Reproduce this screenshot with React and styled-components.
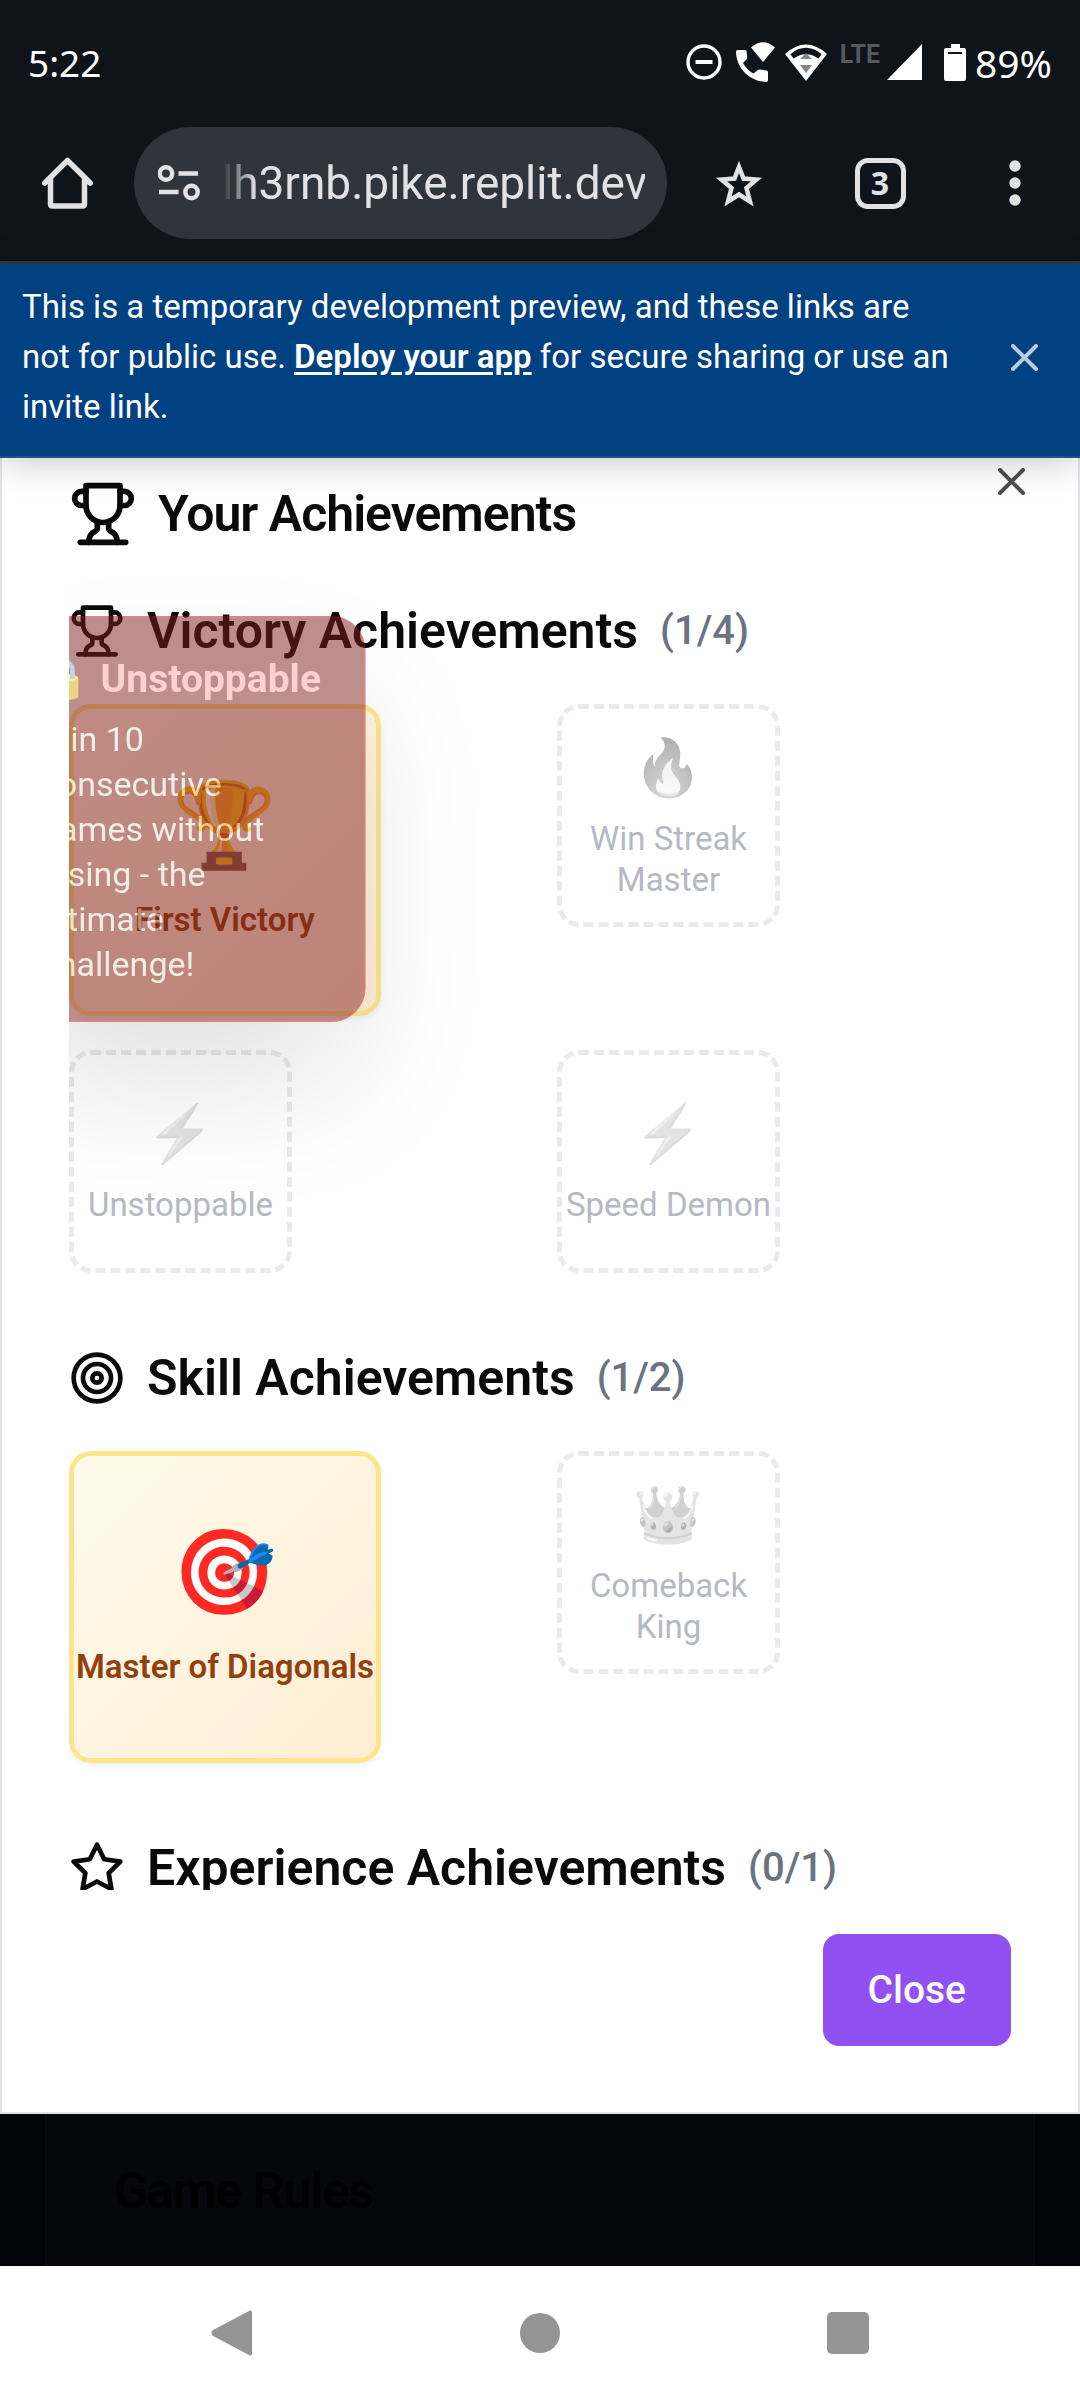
import React from "react";
import styled, { createGlobalStyle, css } from "styled-components";

const GlobalStyle = createGlobalStyle`
  *, *::before, *::after { box-sizing: border-box; }
  body { margin: 0; background: #fff; font-family: Roboto, "Liberation Sans", sans-serif; color: #0a0a0a; }
  button { font: inherit; border: 0; padding: 0; background: none; cursor: pointer; }
  h2, h3, p { margin: 0; }
  svg { display: block; flex: none; }
`;

const Screen = styled.div`
  display: flex;
  flex-direction: column;
  min-height: 100vh;
`;

/* ---------- system status bar ---------- */

const StatusBar = styled.header`
  display: flex;
  align-items: center;
  justify-content: space-between;
  height: 124px;
  padding: 0 28px;
  background: #0f141b;
  color: #fff;
  font-family: "Noto Sans", sans-serif;
  font-size: 37px;
`;

const StatusIcons = styled.div`
  display: flex;
  align-items: center;
`;

const StatusIcon = styled.svg`
  margin-right: ${(p) => p.$gap}px;
`;

const Network = styled.span`
  align-self: flex-start;
  margin-right: 7px;
  font: 700 25px/38px Roboto, sans-serif;
  color: #55585c;
`;

const BatteryLevel = styled.span`
  font-size: 39px;
`;

/* ---------- browser toolbar ---------- */

const Toolbar = styled.nav`
  display: grid;
  grid-template-columns: 134px minmax(0, 1fr) 144px 138px 131px;
  align-items: center;
  padding: 3px 0 22px;
  background: #0f141b;
  border-bottom: 3px solid #33383e;
  color: #e2e2e5;
`;

const ToolButton = styled.button`
  display: flex;
  align-items: center;
  justify-content: center;
  height: 112px;
  color: inherit;
`;

const AddressPill = styled.div`
  display: flex;
  align-items: center;
  height: 112px;
  padding: 0 22px 0 24px;
  border-radius: 56px;
  background: #2f353c;
`;

const AddressInput = styled.input`
  flex: 1;
  min-width: 0;
  margin-left: 22px;
  padding: 0;
  border: 0;
  outline: 0;
  background: none;
  color: inherit;
  font: 400 46px/60px Roboto, sans-serif;
  text-align: right;
  mask-image: linear-gradient(to right, transparent, #000 34px);
`;

const TabCount = styled.span`
  display: flex;
  align-items: center;
  justify-content: center;
  width: 51px;
  height: 51px;
  border: 5px solid currentColor;
  border-radius: 13px;
  font: 700 32px/32px "Noto Sans", sans-serif;
`;

/* ---------- preview banner ---------- */

const Banner = styled.aside`
  position: relative;
  z-index: 2;
  display: flex;
  align-items: center;
  gap: 32px;
  padding: 18px 22px 24px;
  background: #004182;
  border-bottom: 2px solid #1a5490;
  box-shadow: 0 4px 34px rgba(0, 0, 0, 0.22);
  color: #fff;
`;

const BannerText = styled.p`
  flex: 1;
  font-size: 33px;
  line-height: 50px;
`;

const BannerLink = styled.a`
  color: inherit;
  font-weight: 600;
  text-underline-offset: 4px;
`;

const BannerClose = styled.button`
  display: flex;
  justify-content: center;
  width: 68px;
  color: #b8cbdf;
`;

/* ---------- dialog ---------- */

const Dialog = styled.section`
  position: relative;
  padding: 22px 67px 66px;
  border: 2px solid #e3e3e6;
  border-top: 0;
  background: #fff;
`;

const DialogTitle = styled.h2`
  display: flex;
  align-items: center;
  gap: 21px;
  font-size: 50px;
  line-height: 68px;
  font-weight: 600;
  letter-spacing: -1px;
`;

const DialogClose = styled.button`
  position: absolute;
  top: 3px;
  right: 47px;
  display: flex;
  align-items: center;
  justify-content: center;
  width: 40px;
  height: 40px;
  color: #4f4f4f;
`;

const ScrollArea = styled.div`
  display: flex;
  flex-direction: column;
  gap: 77px;
  max-height: 1320px;
  margin-top: 22px;
  padding-top: 33px;
  overflow: auto;
  scrollbar-width: none;
`;

const SectionTitle = styled.h3`
  display: flex;
  align-items: center;
  gap: 22px;
  height: 56px;
  font-size: 50px;
  line-height: 56px;
  font-weight: 600;
`;

const SectionCount = styled.span`
  font-size: 40px;
  font-weight: 500;
  color: #6b7280;
`;

const CardGrid = styled.div`
  display: grid;
  grid-template-columns: 1fr 1fr;
  justify-items: start;
  align-items: start;
  gap: 34px;
  margin-top: 45px;
`;

const Card = styled.article`
  position: relative;
  display: flex;
  flex-direction: column;
  align-items: center;
  justify-content: center;
  border-radius: 22px;
  font-size: 33px;
  line-height: 41px;
  text-align: center;
  ${(p) =>
    p.$unlocked
      ? css`
          width: 312px;
          height: 312px;
          border: 5px solid #fde68a;
          background: linear-gradient(135deg, #fffbeb, #ffedd5) padding-box;
          box-shadow: 0 3px 6px rgba(0, 0, 0, 0.06);
          color: #92400e;
          font-weight: 600;
        `
      : css`
          width: 223px;
          height: 223px;
          border: 5px dashed #e9eaee;
          color: #b5b9c1;
        `}
`;

const Emoji = styled.span`
  font-family: "Noto Color Emoji", sans-serif;
  font-weight: 400;
  ${(p) =>
    p.$unlocked
      ? css`
          margin-bottom: 28px;
          font-size: 84px;
          line-height: 90px;
        `
      : css`
          margin-bottom: 13px;
          font-size: 56px;
          line-height: 73px;
          filter: grayscale(1);
          opacity: 0.5;
        `}
`;

const CardLabel = styled.span`
  white-space: ${(p) => (p.$wrap ? "normal" : "nowrap")};
`;

const Tooltip = styled.div`
  position: absolute;
  z-index: 1;
  bottom: calc(100% + 33px);
  left: 50%;
  transform: translateX(-50%);
  width: max-content;
  padding: 33px 43px;
  border: 2px solid #b30f0f;
  border-radius: 34px;
  background: #7f1d1d;
  box-shadow: 0 70px 140px -16px rgba(0, 0, 0, 0.25);
  opacity: 0.5;
  text-align: left;
`;

const TooltipTitle = styled.div`
  display: flex;
  align-items: center;
  gap: 12px;
  font-size: 39px;
  line-height: 56px;
  font-weight: 700;
  color: #fca5a5;
`;

const TooltipIcon = styled.span`
  font: 400 39px/56px "Noto Color Emoji", sans-serif;
`;

const TooltipText = styled.p`
  max-width: 256px;
  margin-top: 10px;
  font-size: 34px;
  line-height: 45px;
  color: #e5e7eb;
`;

const DialogFooter = styled.footer`
  display: flex;
  justify-content: flex-end;
  margin-top: 44px;
`;

const PrimaryButton = styled.button`
  height: 112px;
  padding: 0 45px;
  border-radius: 16px;
  background: #9050f2;
  color: #fafafa;
  font-size: 39px;
  font-weight: 500;
`;

/* ---------- page behind the dialog ---------- */

const Backdrop = styled.div`
  display: flex;
  flex: 1;
  padding: 0 45px;
  background: #020308;
`;

const RulesCard = styled.section`
  flex: 1;
  padding: 49px 68px 47px;
  border: solid #0a0b10;
  border-width: 0 1px;
  background: #06070b;
`;

const RulesTitle = styled.h2`
  font-size: 50px;
  line-height: 56px;
  font-weight: 600;
  letter-spacing: -1px;
  color: #000;
`;

/* ---------- system navigation ---------- */

const SystemNav = styled.nav`
  display: flex;
  justify-content: center;
  gap: 188px;
  height: 134px;
  background: #fff;
`;

const NavButton = styled.button`
  display: flex;
  align-items: center;
  justify-content: center;
  width: 120px;
  color: #959595;
`;

const CrossIcon = ({ size = 27 }) => (
  <svg width={size} height={size} viewBox="0 0 27 27" fill="none" stroke="currentColor" strokeWidth="4" strokeLinecap="round">
    <path d="M2 2 25 25M25 2 2 25" />
  </svg>
);

const LineIcon = ({ size, children }) => (
  <svg width={size} height={size} viewBox="0 0 24 24" fill="none" stroke="currentColor" strokeWidth="2" strokeLinecap="round" strokeLinejoin="round">
    {children}
  </svg>
);

const TrophyIcon = ({ size = 56 }) => (
  <LineIcon size={size}>
    <path d="M6 9H4.500a2.500 2.500 0 0 1 0-5H6" />
    <path d="M18 9h1.500a2.500 2.500 0 0 0 0-5H18" />
    <path d="M4 22h16" />
    <path d="M10 14.660V17c0 .55-.47.98-.97 1.210C7.850 18.750 7 20.240 7 22" />
    <path d="M14 14.660V17c0 .55.47.98.97 1.210C16.150 18.750 17 20.240 17 22" />
    <path d="M18 2H6v7a6 6 0 0 0 12 0V2Z" />
  </LineIcon>
);

const TargetIcon = () => (
  <LineIcon size={56}>
    <circle cx="12" cy="12" r="10" />
    <circle cx="12" cy="12" r="6" />
    <circle cx="12" cy="12" r="2" />
  </LineIcon>
);

const StarIcon = () => (
  <LineIcon size={56}>
    <path d="M12 2l3.090 6.260L22 9.270l-5 4.870 1.180 6.880L12 17.770l-6.180 3.250L7 14.140 2 9.270l6.910-1.010L12 2z" />
  </LineIcon>
);

const sections = [
  {
    title: "Victory Achievements",
    count: "(1/4)",
    Icon: TrophyIcon,
    items: [
      { name: "First Victory", emoji: "🏆", unlocked: true },
      { name: "Win Streak Master", emoji: "🔥", wrap: true },
      {
        name: "Unstoppable",
        emoji: "⚡",
        tip: "Win 10 consecutive games without losing - the ultimate challenge!",
      },
      { name: "Speed Demon", emoji: "⚡" },
    ],
  },
  {
    title: "Skill Achievements",
    count: "(1/2)",
    Icon: TargetIcon,
    items: [
      { name: "Master of Diagonals", emoji: "🎯", unlocked: true },
      { name: "Comeback King", emoji: "👑", wrap: true },
    ],
  },
  { title: "Experience Achievements", count: "(0/1)", Icon: StarIcon, items: [] },
];

const Achievement = ({ item }) => (
  <Card $unlocked={item.unlocked}>
    <Emoji $unlocked={item.unlocked}>{item.emoji}</Emoji>
    <CardLabel $wrap={item.wrap}>{item.name}</CardLabel>
    {item.tip && (
      <Tooltip role="tooltip">
        <TooltipTitle>
          <TooltipIcon>🔒</TooltipIcon>
          {item.name}
        </TooltipTitle>
        <TooltipText>{item.tip}</TooltipText>
      </Tooltip>
    )}
  </Card>
);

export default function App() {
  return (
    <Screen>
      <GlobalStyle />
      <StatusBar>
        <span>5:22</span>
        <StatusIcons>
          <StatusIcon $gap={14} width="36" height="36" viewBox="0 0 36 36" fill="none" stroke="#fff">
            <circle cx="18" cy="18" r="16" strokeWidth="3.4" />
            <path d="M9.500 18h17" strokeWidth="4" />
          </StatusIcon>
          <StatusIcon $gap={10} width="39" height="40" viewBox="0 0 39 40" fill="#fff">
            <path d="M1.500 8h7.500q1.500 0 1.600 1.500l.6 6q.1 1-.6 1.800L7 21q4 7 10.500 10.500l4.300-3.600q.7-.6 1.600-.5l7 1q1.600.2 1.600 1.700V38q0 2-2 2C13 39 .5 26 0 10q0-2 1.500-2z" />
            <path d="M15 5.500Q27-5 39 5.500L27 20z" />
          </StatusIcon>
          <StatusIcon $gap={13} width="42" height="37" viewBox="0 0 42 37" fill="#fff">
            <path d="M0 10Q21-9 42 10L21 37zM5.500 10.200l3 4.300Q21 6 33.500 14.500l3-4.300Q21-2.500 5.500 10.200z" fillRule="evenodd" />
            <path d="M21 9l6 6H15zM15 21h12l-6 8z" fill="#858585" />
          </StatusIcon>
          <Network>LTE</Network>
          <StatusIcon $gap={22} width="35" height="36" viewBox="0 0 35 36" fill="#fff">
            <path d="M35 0v36H0z" />
          </StatusIcon>
          <StatusIcon $gap={9} width="22" height="37" viewBox="0 0 22 37" fill="#fff">
            <path d="M7 0h9v4h4q2 0 2 2v29q0 2-2 2H2q-2 0-2-2V6q0-2 2-2h5zM4 8v2h14V8z" fillRule="evenodd" />
          </StatusIcon>
          <BatteryLevel>89%</BatteryLevel>
        </StatusIcons>
      </StatusBar>

      <Toolbar aria-label="Browser">
        <ToolButton aria-label="Home">
          <svg width="51" height="52" viewBox="0 0 51 52" fill="none" stroke="currentColor" strokeWidth="5.500" strokeLinecap="round" strokeLinejoin="round">
            <path d="M2.800 26 25.500 3.500 48.200 26" />
            <path d="M8.500 22v25q0 2 2 2h30q2 0 2-2V22" />
          </svg>
        </ToolButton>
        <AddressPill>
          <svg width="42" height="36" viewBox="0 0 42 36" fill="none" stroke="currentColor" strokeWidth="4.500">
            <circle cx="8" cy="8.500" r="6.200" />
            <path d="M20.500 8.500H40M1 27h19.500" />
            <circle cx="33.500" cy="27" r="6.200" />
          </svg>
          <AddressInput aria-label="Address" readOnly value="lh3rnb.pike.replit.dev" />
        </AddressPill>
        <ToolButton aria-label="Bookmark">
          <svg width="48" height="52" viewBox="0 0 48 52" fill="none" stroke="currentColor" strokeWidth="4.500">
            <path d="M24 10 28.500 21.500 41.500 22.500 31.500 31 35 44.500 24 37.500 13 44.500 16.500 31 6.500 22.500 19.500 21.500z" />
          </svg>
        </ToolButton>
        <ToolButton aria-label="Tabs">
          <TabCount>3</TabCount>
        </ToolButton>
        <ToolButton aria-label="Menu">
          <svg width="12" height="46" viewBox="0 0 12 46" fill="currentColor">
            <circle cx="6" cy="6" r="5.700" />
            <circle cx="6" cy="23" r="5.700" />
            <circle cx="6" cy="40" r="5.700" />
          </svg>
        </ToolButton>
      </Toolbar>

      <Banner>
        <BannerText>
          This is a temporary development preview, and these links are not for public use.{" "}
          <BannerLink href="#deploy">Deploy your app</BannerLink> for secure sharing or use an invite link.
        </BannerText>
        <BannerClose aria-label="Dismiss">
          <CrossIcon />
        </BannerClose>
      </Banner>

      <Dialog role="dialog" aria-labelledby="dialog-title">
        <DialogTitle id="dialog-title">
          <TrophyIcon size={68} />
          Your Achievements
        </DialogTitle>
        <DialogClose aria-label="Close dialog">
          <CrossIcon />
        </DialogClose>
        <ScrollArea>
          {sections.map(({ title, count, Icon, items }) => (
            <section key={title}>
              <SectionTitle>
                <Icon />
                {title}
                <SectionCount>{count}</SectionCount>
              </SectionTitle>
              <CardGrid>
                {items.map((item) => (
                  <Achievement key={item.name} item={item} />
                ))}
              </CardGrid>
            </section>
          ))}
        </ScrollArea>
        <DialogFooter>
          <PrimaryButton>Close</PrimaryButton>
        </DialogFooter>
      </Dialog>

      <Backdrop>
        <RulesCard>
          <RulesTitle>Game Rules</RulesTitle>
        </RulesCard>
      </Backdrop>

      <SystemNav aria-label="System">
        <NavButton aria-label="Back">
          <svg width="42" height="46" viewBox="0 0 42 46" fill="currentColor">
            <path d="M38 1Q41-1 41 3v40q0 4-3 2L2 26q-3-3 0-6z" />
          </svg>
        </NavButton>
        <NavButton aria-label="Home screen">
          <svg width="40" height="40" viewBox="0 0 40 40" fill="currentColor">
            <circle cx="20" cy="20" r="20" />
          </svg>
        </NavButton>
        <NavButton aria-label="Recent apps">
          <svg width="42" height="42" viewBox="0 0 42 42" fill="currentColor">
            <rect width="42" height="42" rx="5" />
          </svg>
        </NavButton>
      </SystemNav>
    </Screen>
  );
}
